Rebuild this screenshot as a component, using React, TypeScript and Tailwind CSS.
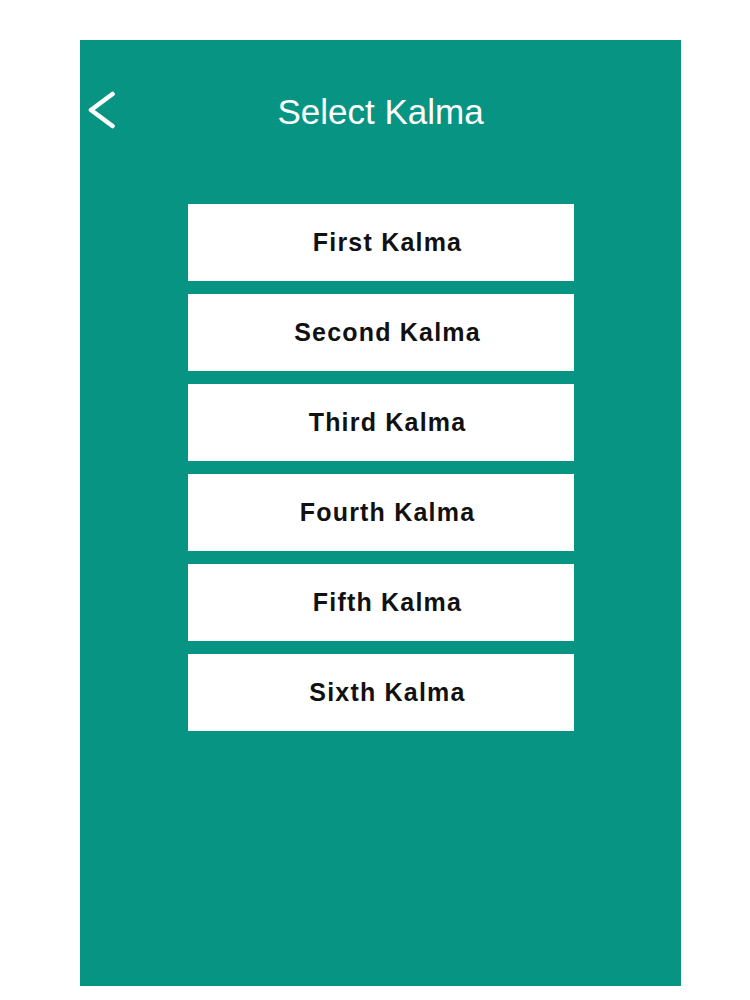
import React from 'react';

const kalmas = ['First Kalma', 'Second Kalma', 'Third Kalma', 'Fourth Kalma', 'Fifth Kalma', 'Sixth Kalma'];

export default function App() {
  return (
    <div className="w-[750px] h-[1000px] bg-white pt-[40px] pl-[80px]" style={{ fontFamily: '"Liberation Sans", Arial, sans-serif' }}>
      <div className="w-[601px] h-[946px] bg-[#079483] flex flex-col">
        <div className="grid grid-cols-[1fr_auto_1fr] items-center mt-[50px] h-[44px]">
          <button className="justify-self-start pl-[8px] -mt-[4px]">
            <svg width="30" height="40" viewBox="0 0 30 40" fill="none">
              <polyline points="24.5,4 3,20 24.5,36" stroke="white" strokeWidth="4.6" strokeLinecap="round" strokeLinejoin="round" />
            </svg>
          </button>
          <h1 className="text-[35px] leading-[44px] text-white font-normal">Select Kalma</h1>
          <div />
        </div>

        <div className="mt-[70px] mx-auto w-[386px] flex flex-col gap-[13px]">
          {kalmas.map(k => (
            <button
              key={k}
              className="h-[77px] bg-white flex items-center justify-center pl-[14px] text-[25px] font-bold tracking-[1.2px] text-[#111111]"
            >
              {k}
            </button>
          ))}
        </div>
      </div>
    </div>
  );
}
